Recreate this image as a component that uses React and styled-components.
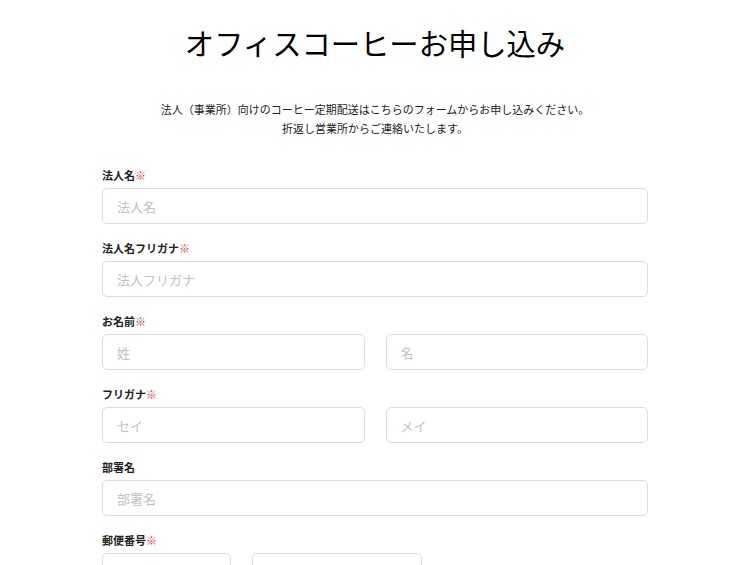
import styled, { createGlobalStyle } from 'styled-components'

const GlobalStyle = createGlobalStyle`
  body {
    margin: 0;
    background: #fff;
    font-family: "Noto Sans CJK JP", "Noto Sans", sans-serif;
    color: #111;
  }
`
const Page = styled.div`
  width: 546px;
  margin: 0 auto;
  padding-top: 22px;
`
const Title = styled.h1`
  margin: 0;
  text-align: center;
  font-size: 29.3px;
  font-weight: 400;
  line-height: 41px;
  color: #000;
`
const Lead = styled.p`
  margin: 37px 0 0;
  text-align: center;
  font-size: 11px;
  line-height: 19px;
  color: #222;
`
const Form = styled.form`
  display: flex;
  flex-direction: column;
  gap: 16px;
  margin-top: 29px;
`
const Field = styled.div`
  display: flex;
  flex-direction: column;
  gap: 5px;
`
const Label = styled.label`
  font-size: 11px;
  line-height: 16px;
  font-weight: 700;
  color: #222;
`
const Required = styled.span`
  color: #e83838;
  font-weight: 400;
`
const Row = styled.div`
  display: grid;
  grid-template-columns: ${(p) => p.$cols || '1fr 1fr'};
  gap: 21px;
`
const Input = styled.input`
  box-sizing: border-box;
  width: 100%;
  height: 36px;
  padding: 0 14px;
  border: 1px solid #dcdcdc;
  border-radius: 5px;
  font-family: inherit;
  font-size: 13px;
  color: #222;
  background: #fff;
  outline: none;
  &::placeholder {
    color: #c2c2c2;
  }
`

function App() {
  return (
    <>
      <GlobalStyle />
      <Page>
        <Title>オフィスコーヒーお申し込み</Title>
        <Lead>
          法人（事業所）向けのコーヒー定期配送はこちらのフォームからお申し込みください。
          <br />
          折返し営業所からご連絡いたします。
        </Lead>
        <Form>
          <Field>
            <Label>法人名<Required>※</Required></Label>
            <Input placeholder="法人名" />
          </Field>
          <Field>
            <Label>法人名フリガナ<Required>※</Required></Label>
            <Input placeholder="法人フリガナ" />
          </Field>
          <Field>
            <Label>お名前<Required>※</Required></Label>
            <Row>
              <Input placeholder="姓" />
              <Input placeholder="名" />
            </Row>
          </Field>
          <Field>
            <Label>フリガナ<Required>※</Required></Label>
            <Row>
              <Input placeholder="セイ" />
              <Input placeholder="メイ" />
            </Row>
          </Field>
          <Field>
            <Label>部署名</Label>
            <Input placeholder="部署名" />
          </Field>
          <Field>
            <Label>郵便番号<Required>※</Required></Label>
            <Row $cols="129px 170px">
              <Input />
              <Input />
            </Row>
          </Field>
        </Form>
      </Page>
    </>
  )
}

export default App
